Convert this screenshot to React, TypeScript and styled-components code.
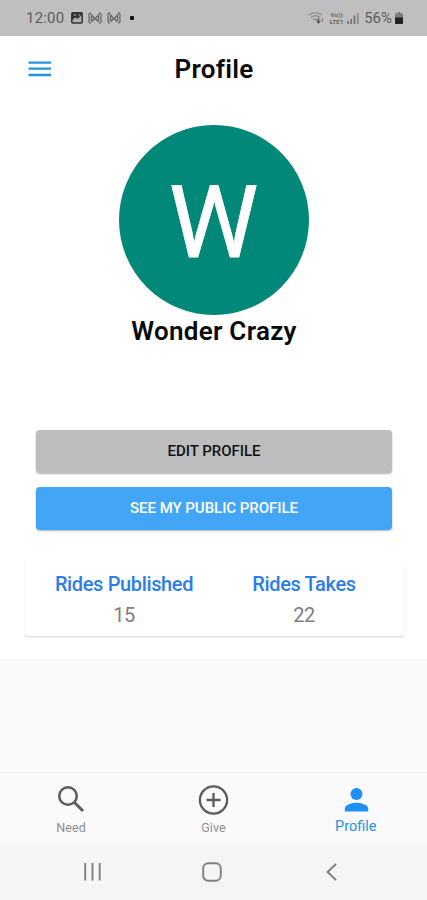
import React from 'react';
import styled, { createGlobalStyle } from 'styled-components';

const GlobalStyle = createGlobalStyle`
  * { box-sizing: border-box; }
  body { margin: 0; background: #fafafa; font-family: Roboto, 'Liberation Sans', sans-serif; }
  svg { display: block; flex: none; }
`;

const Screen = styled.div`
  width: 427px;
  height: 900px;
  display: flex;
  flex-direction: column;
  overflow: hidden;
  background: #fafafa;
`;

const StatusBar = styled.header`
  height: 36px;
  flex: none;
  display: flex;
  align-items: center;
  justify-content: space-between;
  padding: 0 24px 0 26px;
  background: #bfbfbf;
  color: #5c5c5c;
`;

const StatusGroup = styled.div<{ $gap: number }>`
  display: flex;
  align-items: center;
  gap: ${(p) => p.$gap}px;
`;

const StatusText = styled.span<{ $spacing: number }>`
  font-size: 15px;
  line-height: 18px;
  letter-spacing: ${(p) => p.$spacing}px;
`;

const NetworkLabel = styled.span`
  width: 15px;
  display: flex;
  flex-direction: column;
  align-items: center;
  font-size: 6px;
  line-height: 7px;
  font-weight: 700;
  letter-spacing: 0.2px;
  white-space: nowrap;
  color: #646464;
`;

const Content = styled.main`
  height: 623px;
  flex: none;
  display: flex;
  flex-direction: column;
  background: #fff;
`;

const TitleBar = styled.div`
  height: 66px;
  display: grid;
  grid-template-columns: 1fr auto 1fr;
  align-items: center;
  padding: 0 27px 0 28px;
`;

const MenuButton = styled.button`
  width: 24px;
  padding: 0;
  border: 0;
  background: none;
`;

const Title = styled.h1`
  margin: 0;
  font-size: 26px;
  line-height: 30px;
  font-weight: 600;
  letter-spacing: 0.25px;
  color: #0a0a0a;
`;

const Identity = styled.section`
  margin-top: 23px;
  display: flex;
  flex-direction: column;
  align-items: center;
`;

const Avatar = styled.div`
  width: 190px;
  height: 190px;
  border-radius: 50%;
  background: #018878;
  color: #fff;
  font-size: 101px;
  line-height: 195px;
  text-align: center;
  -webkit-text-stroke: 0.8px #fff;
`;

const Name = styled.h2`
  margin: 0;
  padding: 1px 0 0 1px;
  font-size: 26px;
  line-height: 30px;
  font-weight: 600;
  letter-spacing: 0.3px;
  color: #0a0a0a;
`;

const Actions = styled.div`
  margin: 84px 35px 0 36px;
  display: flex;
  flex-direction: column;
  gap: 14px;
`;

const ActionButton = styled.button<{ $primary?: boolean }>`
  height: 43px;
  padding: 0;
  border: 0;
  border-radius: 4px;
  background: ${(p) => (p.$primary ? '#42a5f5' : '#bdbdbd')};
  color: ${(p) => (p.$primary ? '#fff' : '#111')};
  box-shadow: 0 1px 2px rgba(0, 0, 0, 0.3);
  font: 500 15px/43px Roboto, sans-serif;
  letter-spacing: -0.04px;
`;

const Stats = styled.section`
  margin: 30px 23px 0 25px;
  height: 76px;
  display: grid;
  grid-template-columns: 198px 162px;
  border-radius: 3px;
  box-shadow: 0 1px 1.5px rgba(0, 0, 0, 0.17);
`;

const Stat = styled.div`
  display: flex;
  flex-direction: column;
  align-items: center;
  padding-top: 12px;
`;

const StatLabel = styled.span`
  font-size: 20px;
  line-height: 24px;
  font-weight: 500;
  letter-spacing: -0.36px;
  white-space: nowrap;
  color: #2b7de9;
`;

const StatValue = styled.span`
  margin-top: 7px;
  font-size: 20px;
  line-height: 24px;
  letter-spacing: -0.4px;
  color: #808080;
`;

const Tabs = styled.nav`
  margin-top: auto;
  height: 72px;
  flex: none;
  display: grid;
  grid-template-columns: repeat(3, 1fr);
  border-top: 1px solid #eee;
`;

const Tab = styled.div<{ $active?: boolean }>`
  display: flex;
  flex-direction: column;
  align-items: center;
  padding-top: 10px;
  color: ${(p) => (p.$active ? '#1e90f5' : '#5c5c5c')};
`;

const TabLabel = styled.span<{ $active?: boolean }>`
  margin-top: ${(p) => (p.$active ? 2 : 3)}px;
  font-size: ${(p) => (p.$active ? 14.5 : 12.5)}px;
  line-height: 16px;
  letter-spacing: ${(p) => (p.$active ? 0 : 0.1)}px;
  color: ${(p) => (p.$active ? '#2892e0' : '#8f8f8f')};
`;

const SystemBar = styled.footer`
  height: 56px;
  flex: none;
  display: grid;
  grid-template-columns: 118.5px 120px 12px;
  align-items: center;
  padding-left: 83px;
  background: #f5f5f5;
`;

const PhotoIcon = () => (
  <svg width="12" height="12" viewBox="0 0 12 12">
    <rect x=".8" y=".8" width="10.4" height="10.2" rx="1" fill="#b0b0b0" stroke="#333" strokeWidth="1.5" />
    <path d="M1 1h10v2L8.500 5 6.500 7 4.500 5.500 1 8z" fill="#333" />
    <path d="M3 3.200h1.800M7.500 3h1.800" stroke="#b0b0b0" strokeWidth="1.200" />
  </svg>
);

const CastIcon = () => (
  <svg width="14" height="12" viewBox="0 0 14 12" fill="none" stroke="#666" strokeWidth="1.3">
    <path d="M3 1Q.5 1 1 4t0 4q-.5 3 2 3M11 1q2.500 0 2 3t0 4q.5 3-2 3M3.500 9.500V3l3.500 4 3.500-4v6.500M4 9.500L7 6l3 3.500" />
  </svg>
);

const WifiIcon = () => (
  <svg width="16" height="14" viewBox="0 0 16 14" fill="none" stroke="#858585" strokeWidth="1.2">
    <path d="M1 4Q7.500-.5 14 4M3 6.500Q7.500 3 12 6.500M5 9Q7.500 7 9 9" />
    <path d="M14.500 7v4" />
    <path d="M10.500 7v5M8.500 9.500l2 2.500 2-2.500" stroke="#555" />
  </svg>
);

const SignalIcon = () => (
  <svg width="12" height="12" viewBox="0 0 12 12" fill="#757575">
    <path d="M0 9h1.800v3H0zM3.300 7h1.800v5H3.300zM6.600 3.500h1.800V12H6.600z" />
    <path d="M9.900 1h1.800v11H9.900z" fill="#8a8a8a" />
  </svg>
);

const BatteryIcon = () => (
  <svg width="8" height="12" viewBox="0 0 8 12">
    <path d="M2.500 0h3v1.500H8V11a1 1 0 0 1-1 1H1a1 1 0 0 1-1-1V1.500h2.500z" fill="#7b7b7b" />
    <path d="M0 5.500h8V11a1 1 0 0 1-1 1H1a1 1 0 0 1-1-1z" fill="#222" />
  </svg>
);

const Dot = styled.i`
  width: 4px;
  height: 4px;
  margin-left: 4px;
  border-radius: 1px;
  background: #111;
`;

export default function App() {
  return (
    <>
      <GlobalStyle />
      <Screen>
        <StatusBar>
          <StatusGroup $gap={7}>
            <StatusText $spacing={0.2}>12:00</StatusText>
            <StatusGroup $gap={5}>
              <PhotoIcon />
              <CastIcon />
              <CastIcon />
              <Dot />
            </StatusGroup>
          </StatusGroup>
          <StatusGroup $gap={5}>
            <WifiIcon />
            <StatusGroup $gap={5}>
              <StatusGroup $gap={3}>
                <NetworkLabel>
                  <span>Vo))</span>
                  <span>LTE1</span>
                </NetworkLabel>
                <SignalIcon />
              </StatusGroup>
              <StatusGroup $gap={3}>
                <StatusText $spacing={0}>56%</StatusText>
                <BatteryIcon />
              </StatusGroup>
            </StatusGroup>
          </StatusGroup>
        </StatusBar>

        <Content>
          <TitleBar>
            <MenuButton aria-label="Menu">
              <svg width="24" height="18" viewBox="0 0 24 18" stroke="#2493e0" strokeWidth="2.300">
                <path d="M.5 2.600h22.500M.5 8.700h22.500M.5 15h22.500" />
              </svg>
            </MenuButton>
            <Title>Profile</Title>
          </TitleBar>
          <Identity>
            <Avatar>W</Avatar>
            <Name>Wonder Crazy</Name>
          </Identity>
          <Actions>
            <ActionButton>EDIT PROFILE</ActionButton>
            <ActionButton $primary>SEE MY PUBLIC PROFILE</ActionButton>
          </Actions>
          <Stats>
            <Stat>
              <StatLabel>Rides Published</StatLabel>
              <StatValue>15</StatValue>
            </Stat>
            <Stat>
              <StatLabel>Rides Takes</StatLabel>
              <StatValue>22</StatValue>
            </Stat>
          </Stats>
        </Content>

        <Tabs>
          <Tab>
            <svg width="34" height="34" viewBox="0 0 34 34" fill="none" stroke="currentColor">
              <circle cx="14" cy="13" r="8.800" strokeWidth="2.500" />
              <path d="M20 19l9 9" strokeWidth="3" />
            </svg>
            <TabLabel>Need</TabLabel>
          </Tab>
          <Tab>
            <svg width="34" height="34" viewBox="0 0 34 34" fill="none" stroke="currentColor" strokeWidth="2.300">
              <circle cx="17.500" cy="17" r="13.600" />
              <path d="M17.500 10v14M10.500 17h14" />
            </svg>
            <TabLabel>Give</TabLabel>
          </Tab>
          <Tab $active>
            <svg width="34" height="34" viewBox="0 0 34 34" fill="currentColor">
              <circle cx="17.500" cy="11" r="6" />
              <path d="M5.800 28.500v-3c0-4 7.800-5.800 11.700-5.800s11.700 1.800 11.700 5.800v3z" />
            </svg>
            <TabLabel $active>Profile</TabLabel>
          </Tab>
        </Tabs>

        <SystemBar>
          <svg width="19" height="18" viewBox="0 0 19 18" stroke="#808080" strokeWidth="1.900">
            <path d="M2.200 0v17.500M9.500 0v17.500M16.700 0v17.500" />
          </svg>
          <svg width="20" height="20" viewBox="0 0 20 20" fill="none" stroke="#808080" strokeWidth="1.900">
            <rect x="1.200" y="1.200" width="17.500" height="17.500" rx="5" />
          </svg>
          <svg width="15" height="18" viewBox="0 0 15 18" fill="none" stroke="#808080" strokeWidth="1.900">
            <path d="M14 1L5.500 9l8.500 8" />
          </svg>
        </SystemBar>
      </Screen>
    </>
  );
}
